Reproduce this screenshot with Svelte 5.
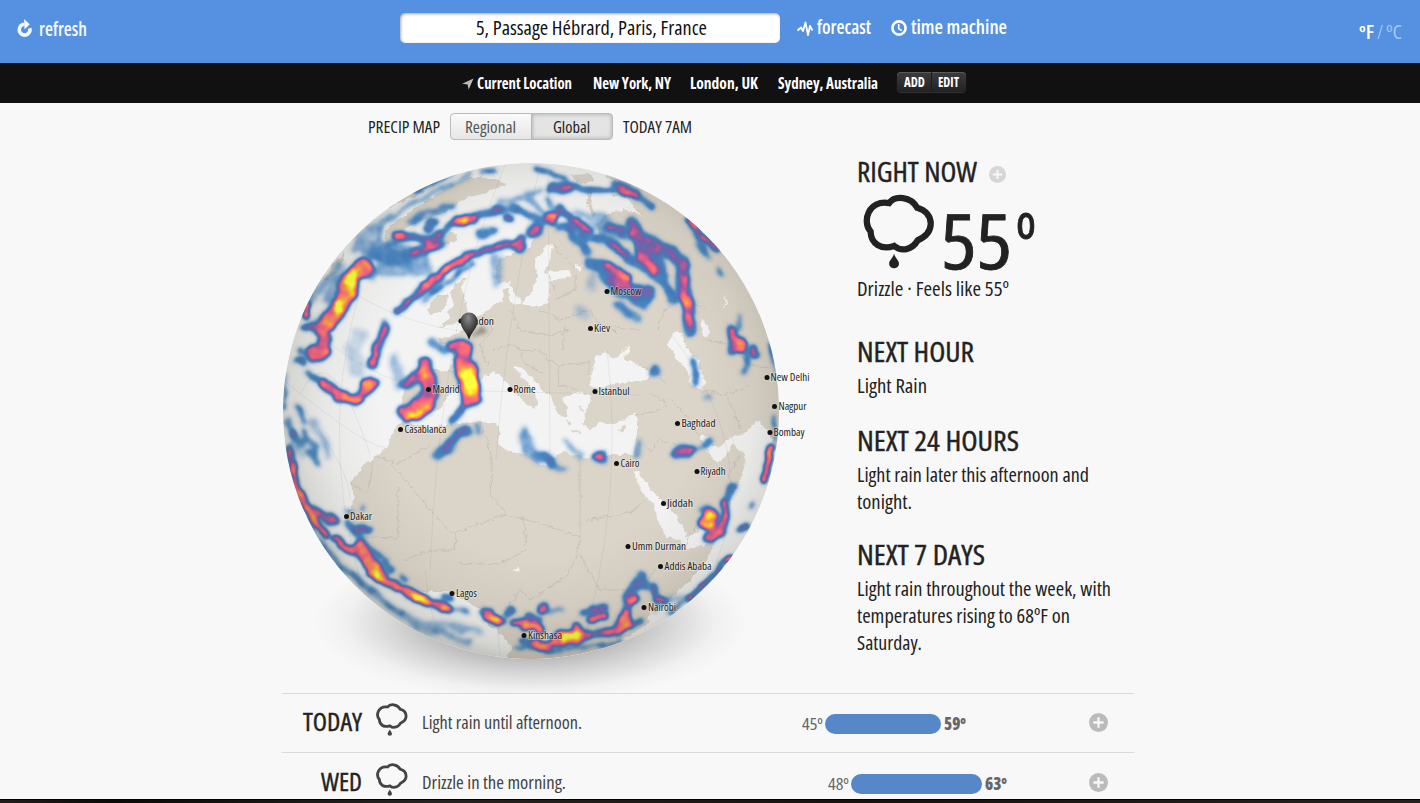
<script>
  const cities = [
    ['London', 461, 321, 464, 30], ['Moscow', 607, 291.5, 610.5, 31], ['Kiev', 590.5, 328.5, 594, 16],
    ['Rome', 510, 389.5, 513.5, 22], ['Istanbul', 595, 391.5, 598.5, 31], ['Madrid', 428.5, 389.5, 432.5, 27],
    ['New Delhi', 767, 377.5, 770.5, 39], ['Nagpur', 774.5, 406.5, 778.5, 28], ['Bombay', 770, 432.5, 773.5, 31],
    ['Baghdad', 677.5, 423.5, 681.5, 34], ['Cairo', 616.5, 463.5, 620.5, 19], ['Riyadh', 697, 471.5, 700.5, 25],
    ['Jiddah', 663.5, 503.5, 667, 26], ['Umm Durman', 628, 546.5, 632, 54], ['Addis Ababa', 660.5, 566.5, 664.5, 47],
    ['Nairobi', 644, 607.5, 648, 28], ['Kinshasa', 524, 635.5, 528, 34], ['Lagos', 452, 593.5, 456, 21],
    ['Dakar', 346.5, 516.5, 350, 22], ['Casablanca', 400.5, 429.5, 404.5, 42]
  ];

  // Rain bands: path, stroke width, intensity 0..1
  const rain = [
    ['M364 268L352 277 346 297 337 313 323 326', 15, .74], ['M353 273L350 282M342 299L338 310', 9, 1],
    ['M345 272L332 285 325 300M312 300L325 280 340 265', 7, .2], ['M315 325L330 310 340 285', 8, .22],
    ['M325 341L323 350 314 354', 13, .68], ['M306 329L314 327 322 338', 6, .5], ['M296 361L305 363M303 354L300 350', 5, .42], ['M308 305L306 318', 4, .95],
    ['M397 312L423 288 443 270 467 257 493 247 520 245 524 240', 6, .6], ['M425 287L443 270 467 257', 7, .72], ['M518 247L523 244', 9, .58], ['M536 229L533 233', 10, .56],
    ['M430 294L452 279 471 266', 4, .46], ['M424 300L440 286', 5, .24],
    ['M394 236L413 237 433 240 440 232', 6, .5], ['M395 236L402 234', 4, .78], ['M416 252L436 246', 9, .54], ['M447 229L452 224', 5, .5],
    ['M457 221L474 219', 9, .64], ['M460 221L466 220', 6, .86], ['M475 215L495 212 513 208 525 212 540 222', 6, .38], ['M495 210L502 209', 5, .52], ['M506 218L512 218', 5, .54],
    ['M428 229L434 222', 7, .48], ['M480 234L493 230', 8, .38],
    ['M372 250L392 252 420 262', 22, .22], ['M380 258L400 258 422 250 440 243', 10, .36], ['M380 265L372 275M400 262L420 268', 8, .25], ['M385 268L425 268', 14, .2],
    ['M382 258L375 240 387 220 413 203 453 184 470 175', 4, .26], ['M372 245L372 255 392 245', 9, .3], ['M412 222L428 212 452 207', 7, .28], ['M355 250L372 228 390 218', 9, .19],
    ['M415 192L440 178 455 170M482 173L495 172', 5, .38], ['M500 202L530 195 540 190', 6, .22], ['M497 258L497 282', 9, .18],
    ['M387 327L378 346 371 363', 8, .52], ['M387 323L383 332', 9, .38], ['M376 346L372 361', 5, .68], ['M360 335L352 350 358 372', 14, .12], ['M395 360L400 385', 12, .15],
    ['M308 373L311 379 323 381', 4, .42], ['M324 382L337 395 355 400 367 388 374 381', 9, .72], ['M366 386L374 382', 12, .7], ['M350 398L356 399', 7, .85],
    ['M424 364L426 378 427 395 413 409 403 411', 12, .62], ['M423 374L405 385', 10, .58], ['M428 376L430 395', 17, .62], ['M424 371L426 375', 8, .86], ['M409 416L416 414 430 402', 10, .7], ['M411 416L418 413', 6, .84],
    ['M456 347L467 348 462 360 467 376 470 398', 14, .66], ['M468 374L471 398', 20, .7], ['M465 375L471 374 472 390', 12, .96], ['M467 378L471 386', 10, 1],
    ['M452 344L460 345', 8, .45], ['M440 346L446 350 430 342', 8, .28], ['M467 403L453 422', 7, .48], ['M466 430L452 443 438 455', 9, .4], ['M457 438L449 445', 5, .54], ['M476 424L478 432', 5, .33],
    ['M288 420L292 432 300 445 306 440M308 452L318 463 314 448 305 430M298 408L305 420', 6, .3], ['M291 430L293 438', 5, .5], ['M289 447L291 460', 5, .58], ['M300 455L290 435M312 420L330 455', 6, .16],
    ['M292 465L296 485 304 504 314 520 327 535', 5, .86], ['M314 511L335 520', 8, .5], ['M318 513L334 519', 4, .56],
    ['M335 540L350 550 366 562 376 575 395 585 413 595 427 603 448 608', 7, .72], ['M360 549L372 567 381 577', 13, .74], ['M370 574L386 582M405 590L425 602', 6, .97], ['M436 607L450 607', 5, .8],
    ['M347 522L360 538 377 552 392 570', 5, .38], ['M357 528L367 530', 7, .46], ['M402 577L405 579', 4, .5], ['M362 506L361 508M346 512L352 510', 4, .3], ['M444 598L452 598', 4, .54],
    ['M310 530L335 560 380 600 420 627 470 642', 7, .22], ['M325 548L355 580 400 612', 4, .33], ['M410 620L450 626 480 632', 7, .18], ['M450 608L468 612', 4, .33],
    ['M486 612L490 613', 6, .54], ['M486 618L500 621', 6, .8], ['M495 620L502 621', 5, .95], ['M514 623L535 626 540 632', 6, .8], ['M507 611L513 609', 7, .5], ['M530 617L538 619', 5, .6],
    ['M523 640L532 643 545 647 555 640 573 635 600 633 622 630', 6, .6], ['M536 645L547 646', 8, .76], ['M560 638L577 635', 12, .78], ['M567 638L577 635', 6, 1], ['M575 628L576 640', 8, .76],
    ['M516 647L530 648M548 652L572 648 606 645 620 640', 3, .42], ['M541 608L546 608', 6, .6], ['M562 610L550 612', 4, .27],
    ['M583 612L603 606', 6, .5], ['M591 620L605 615', 8, .64], ['M641 580L627 598 625 615 620 628', 8, .44], ['M628 603L638 598M627 615L622 619M622 629L630 622', 7, .72], ['M623 623L627 622', 5, .85],
    ['M641 575L636 583 646 585', 8, .42], ['M655 588L657 600 664 602', 7, .46], ['M655 602L661 600', 5, .66], ['M618 634L642 620', 3, .5], ['M655 610L672 597 690 595', 6, .2],
    ['M711 516L708 523', 15, .76], ['M712 517L708 524', 9, 1], ['M724 504L727 516 720 528 711 542', 6, .64], ['M707 540L720 530', 7, .62], ['M733 487L727 499', 6, .48], ['M702 510L706 509', 7, .33],
    ['M679 453L688 450', 11, .5], ['M682 453L686 451', 6, .58], ['M687 453L706 444', 4, .36], ['M705 443L708 440', 7, .38], ['M599 457L604 458', 9, .5], ['M601 457L603 458', 4, .6], ['M546 458L551 463', 9, .46], ['M524 432L530 452 540 458', 10, .25], ['M553 462L565 470M566 441L582 456', 5, .22], ['M638 440L638 459', 4, .26],
    ['M771 448L768 463 763 480', 6, .86], ['M740 531L748 525', 5, .54], ['M750 508L753 504', 4, .36], ['M732 555L712 577 690 599', 3, .8], ['M690 598L670 612', 4, .36],
    ['M536 170L550 172 567 178', 3, .46], ['M551 189L568 187', 10, .5], ['M570 187L597 190 625 191', 4, .48], ['M613 183L630 190 638 198 650 206', 6, .46], ['M622 191L634 193', 6, .66],
    ['M550 215L554 216', 6, .76], ['M544 221L553 223', 5, .54], ['M530 200L540 210 548 220M548 200L558 212', 5, .26], ['M560 208L575 222 589 231', 5, .5], ['M578 223L589 231', 5, .62],
    ['M560 227L580 230 585 238M572 237L587 250', 7, .38], ['M592 238L600 240', 5, .45], ['M578 213L600 220', 7, .18], ['M612 226L622 233', 7, .5], ['M590 220L612 240', 7, .2], ['M597 218L625 235', 12, .2],
    ['M631 222L642 237 670 252 683 264 682 283 688 303 690 332', 11, .46], ['M684 262L682 283 688 305 690 320', 9, .57], ['M683 297L687 303', 6, .8], ['M635 232L645 252', 13, .5], ['M643 255L653 268', 8, .66], ['M660 250L680 260', 12, .46],
    ['M605 240L630 258 660 277 674 298', 10, .37], ['M608 241L624 253', 6, .5], ['M645 245L662 275', 14, .37], ['M590 262L606 268 625 282', 10, .42], ['M609 266L628 278', 6, .74], ['M607 276L622 290 648 294', 15, .42], ['M620 285L633 293 648 293', 7, .55], ['M633 300L645 305', 10, .33],
    ['M616 305L637 318', 6, .3], ['M592 275L592 285M580 308L585 315', 9, .13], ['M732 332L732 349 742 346', 9, .6], ['M739 341L742 348', 8, .82], ['M753 348L756 356', 5, .62], ['M749 352L748 363 743 372', 5, .38], ['M739 315L740 328', 5, .28],
    ['M693 362L694 383', 5, .47], ['M652 373L657 369', 7, .38], ['M692 228L710 258M697 245L708 255', 4, .35], ['M718 269L722 273', 3, .38], ['M705 398L709 397', 4, .23], ['M687 218L703 237 719 251', 3, .72], ['M285 375L284 410M774 415L776 440M770 345L776 372', 2, .5]
  ].sort((a, b) => a[2] - b[2]);

  const days = [
    { name: 'TODAY', nameW: 59, text: 'Light rain until afternoon.', textW: 160, low: '45º', high: '59º', start: 520, bar: 116 },
    { name: 'WED', nameW: 41, text: 'Drizzle in the morning.', textW: 144, low: '48º', high: '63º', start: 546, bar: 131 }
  ];
  let unit = $state('F');
  let view = $state('Global');
</script>

{#snippet t(text, w, size, weight = 400)}
  <svg class="t" class:medium={weight === 500} class:large={size > 60} width={w} height={size}><text x="0" y={size} textLength={w} lengthAdjust="spacingAndGlyphs" font-size={size} font-weight={weight === 500 ? 400 : weight}>{text}</text></svg>
{/snippet}

{#snippet cloud(w, h)}
  <svg class="cloud" width={w} height={h} viewBox="68 133 218 224" preserveAspectRatio="none">
    <path d="M147 160C165 136 213 140 232 174C258 181 274 200 273 224C272 248 255 262 234 271C216 302 183 305 162 288C123 301 92 282 91 245C64 214 85 150 147 160Z" fill="none" stroke="currentColor" stroke-width="19" stroke-linejoin="miter" />
    <path d="M162 311C165 324 177 331 177 341A15 14 0 0 1 147 341C147 331 159 324 162 311Z" fill="currentColor" />
  </svg>
{/snippet}

{#snippet plus(size)}
  <svg class="plus" width={size} height={size} viewBox="0 0 20 20"><circle cx="10" cy="10" r="10" fill="currentColor" /><path d="M10 4.6V15.4M4.6 10H15.4" stroke="#f8f8f8" stroke-width="2.4" /></svg>
{/snippet}

<div class="page">
  <header>
    <a class="refresh">
      <svg width="16" height="19" viewBox="0 0 16 19"><path d="M7.6 5.3A5.4 5.4 0 1 0 12.8 9.2" fill="none" stroke="#f5f9ff" stroke-width="3.6" /><path d="M7 0L12.8 5.2 7.6 10.2Z" fill="#f5f9ff" /></svg>
      {@render t('refresh', 48, 20, 600)}
    </a>
    <div class="search">{@render t('5, Passage Hébrard, Paris, France', 231, 20)}</div>
    <a class="nav forecast">
      <svg width="17" height="17" viewBox="0 0 17 17"><path d="M.5 10.500L4 7.500 6 11 8.500 2.500 11 15 13 6 15.500 10.500" fill="none" stroke="#fff" stroke-width="1.8" stroke-linejoin="round" /></svg>
      {@render t('forecast', 54, 20, 600)}
    </a>
    <a class="nav time">
      <svg width="16" height="16" viewBox="0 0 16 16"><circle cx="8" cy="8" r="6.6" fill="none" stroke="#fff" stroke-width="2.6" /><path d="M7.7 4V8.6L10.8 10.6" fill="none" stroke="#fff" stroke-width="1.6" /></svg>
      {@render t('time machine', 96, 20, 600)}
    </a>
    <div class="units">
      <span class:off={unit !== 'F'}>{@render t('ºF', 15, 19, 600)}</span>
      <span class="off">{@render t('/', 6, 19)}</span>
      <span class:off={unit !== 'C'}>{@render t('ºC', 16, 19)}</span>
    </div>
  </header>

  <nav class="places">
    <svg class="arrow" width="12" height="12" viewBox="0 0 12 12"><path d="M11.5.5L6.7 11.5 5.6 6.6.2 5.8Z" fill="#bbb" /></svg>
    {@render t('Current Location', 95, 16, 700)}
    {@render t('New York, NY', 78, 16, 700)}
    {@render t('London, UK', 68, 16, 700)}
    {@render t('Sydney, Australia', 100, 16, 700)}
    <div class="edit"><b>{@render t('ADD', 21, 13.5, 700)}</b><b>{@render t('EDIT', 21, 13.5, 700)}</b></div>
  </nav>

  <main>
    <section class="map">
      <div class="controls">
        {@render t('PRECIP MAP', 72, 16)}
        <div class="toggle">
          <span class:on={view === 'Regional'}>{@render t('Regional', 51, 16)}</span>
          <span class:on={view === 'Global'}>{@render t('Global', 37, 16)}</span>
        </div>
        {@render t('TODAY 7AM', 69, 16)}
      </div>
      <svg class="globe" width="540" height="540" viewBox="282 153 540 540">
        <defs>
          <clipPath id="sphere"><circle cx="531" cy="411" r="248" /></clipPath>
          <radialGradient id="shade" cx=".52" cy=".47" r=".54">
            <stop offset=".6" stop-color="#443" stop-opacity="0" /><stop offset=".8" stop-color="#443" stop-opacity=".06" />
            <stop offset=".94" stop-color="#443" stop-opacity=".17" /><stop offset="1" stop-color="#443" stop-opacity=".3" />
          </radialGradient>
          <radialGradient id="drop" cx=".5" cy=".5" r=".5">
            <stop offset="0" stop-color="#000" stop-opacity=".42" /><stop offset=".4" stop-color="#000" stop-opacity=".28" /><stop offset=".65" stop-color="#000" stop-opacity=".13" /><stop offset=".85" stop-color="#000" stop-opacity=".03" /><stop offset="1" stop-color="#000" stop-opacity="0" />
          </radialGradient>
          <radialGradient id="pinFill" cx=".45" cy=".2" r=".7"><stop offset="0" stop-color="#8a8a8a" /><stop offset="1" stop-color="#1b1b1b" /></radialGradient>
          <filter id="soft"><feGaussianBlur stdDeviation="2" /></filter>
          <filter id="coast" x="-5%" y="-5%" width="110%" height="110%"><feTurbulence type="fractalNoise" baseFrequency=".16" numOctaves="3" seed="4" /><feDisplacementMap in="SourceGraphic" scale="6" xChannelSelector="R" yChannelSelector="G" /></filter>
          <filter id="heat" filterUnits="userSpaceOnUse" x="275" y="155" width="515" height="515" color-interpolation-filters="sRGB">
            <feTurbulence type="fractalNoise" baseFrequency=".06" numOctaves="3" seed="11" result="n" />
            <feDisplacementMap in="SourceGraphic" in2="n" scale="9" xChannelSelector="R" yChannelSelector="G" />
            <feGaussianBlur stdDeviation="2.1" result="b" />
            <feTurbulence type="fractalNoise" baseFrequency=".08" numOctaves="2" seed="5" />
            <feColorMatrix values="1 0 0 0 0  1 0 0 0 0  1 0 0 0 0  0 0 0 0 1" result="g" />
            <feComposite in="b" in2="g" operator="arithmetic" k1=".7" k2=".68" result="v" />
            <feComponentTransfer result="c">
              <feFuncR type="table" tableValues=".22 .22 .22 .22 .24 .50 .86 1 1 1 1" />
              <feFuncG type="table" tableValues=".50 .50 .50 .49 .46 .34 .34 .42 .58 .82 1" />
              <feFuncB type="table" tableValues=".78 .78 .77 .75 .72 .65 .54 .48 .32 .14 .25" />
            </feComponentTransfer>
            <feColorMatrix in="v" values="0 0 0 0 0  0 0 0 0 0  0 0 0 0 0  1 0 0 0 0" />
            <feComponentTransfer result="m"><feFuncA type="table" tableValues="0 .2 .55 .88 .95 .96 .97 1 1 1 1" /></feComponentTransfer>
            <feComposite in="c" in2="m" operator="in" />
          </filter>
        </defs>
        <ellipse cx="531" cy="622" rx="218" ry="80" fill="url(#drop)" />
        <g clip-path="url(#sphere)">
          <rect x="280" y="160" width="504" height="504" fill="#f3f3f3" />
          <g filter="url(#coast)">
            <g fill="#dbd4c9">
              <path d="M399 423L393 432 388 447 377 454 363 465 351 483 353 500 348 515 352 530 367 550 383 570 397 585 420 592 447 592 457 594 470 605 487 609 487 623 507 640 513 648 506 655 520 680 610 670 620 640 647 625 650 613 673 597 703 567 715 543 700 545 687 549 685 538 703 528 727 513 730 497 737 487 744 472 745 453 737 449 732 437 745 433 758 421 766 430 772 440 775 450 800 445 800 300 700 150 620 160 605 177 625 185 612 195 630 200 640 215 625 210 612 212 603 217 595 225 600 233 588 240 578 232 565 226 550 222 540 227 527 250 500 258 495 273 498 284 510 280 513 290 522 303 515 305 508 300 510 290 503 289 502 302 493 305 483 313 473 320 460 332 450 337 438 338 440 343 453 347 452 363 448 372 420 367 407 377 402 397 403 411 412 420Z" />
              <path d="M455 283L467 277 461 287 463 293 467 307 468 314 462 322 440 327 450 318 445 313 453 305 450 293Z" />
              <path d="M427 310L437 295 448 295 447 303 441 312 428 314Z" /><path d="M441 238L447 232 457 235 455 242 445 244Z" />
              <path d="M383 240L388 227 403 217 423 203 447 187 467 178 493 178 507 183 487 193 467 198 450 210 427 218 403 230 393 240 387 246Z" />
              <path d="M310 300L325 270 340 248 363 226 390 207 423 192 440 180 400 185 350 225 310 270 300 300ZM322 282L335 262 345 252 340 270Z" />
              <path d="M570 175L590 174 595 181 580 184Z" /><path d="M587 193L592 192 590 205 597 215 592 216 587 206Z" />
              <path d="M492 384L497 383 497 390 492 391ZM490 393L496 391 496 404 490 405ZM515 416L530 413 528 421 518 421Z" />
            </g>
            <g fill="#f3f3f3">
              <path d="M406 421L413 417 432 413 443 405 447 395 460 388 480 380 493 371 500 374 512 390 525 402 535 410 538 402 530 385 514 368 520 366 535 382 550 395 557 412 565 418 568 408 562 398 577 392 592 396 587 408 583 425 590 430 600 422 612 424 637 414 637 433 633 455 610 455 597 462 582 457 563 452 550 460 547 468 540 463 527 455 510 453 497 443 500 433 497 423 480 422 460 423 430 427 413 424Z" />
              <path d="M596 357L605 353 613 358 618 357 630 345 630 352 623 357 640 365 650 372 646 380 627 382 610 385 595 389 590 383Z" />
              <path d="M673 332L682 332 684 343 693 357 700 360 698 368 706 382 700 388 691 384 688 372 673 353 667 345Z" /><path d="M700 321L704 320 709 333 707 338 702 334Z" />
              <path d="M547 245L553 247 550 260 544 272 570 271 572 276 550 281 548 303 533 307 522 303 528 297 533 290 538 275 534 262Z" /><path d="M575 264L582 266 580 271 575 268Z" />
              <path d="M633 473L638 472 653 492 667 507 677 517 684 528 686 540 692 545 685 550 680 540 667 537 658 522 653 503 645 497Z" />
              <path d="M700 436L707 436 711 445 720 447 731 437 734 442 727 455 717 463 708 452Z" />
              <path d="M684 540L700 532 716 526 722 530 712 542 700 546 688 550Z" /><path d="M725 295L727 304 724 307M512 570L518 567 522 573" />
            </g>
            <path d="M566 420L570 425M579 406L584 412M571 431L582 433" stroke="#dbd4c9" stroke-width="2" /><path d="M619 431L627 426" stroke="#dbd4c9" stroke-width="4" />
          </g>
          <g fill="none" stroke="#beb5a9" stroke-width=".8" opacity=".75" filter="url(#coast)">
            <path d="M377 457L397 464 430 446M392 464L450 533 456 533 506 514 520 518 528 519 580 537 580 460M372 460L372 470 367 493 350 483M398 488L398 538 360 537M480 423L487 440 492 460 491 495 506 514M456 533L455 550 433 550 403 560M524 519L526 550 500 565 460 563M580 537L575 560 568 575 530 600 520 590 500 620M585 520L630 513 645 500M580 555L600 590 640 590 655 570M636 440L650 450 660 440 695 450M637 415L660 410 670 400 690 420 700 436M665 402L650 392M687 545L690 535 710 515M735 495L728 475 740 455" />
            <path d="M448 372L468 378M483 315L492 330 480 345 488 365M492 350L510 345 525 352 540 350 548 360 560 365 590 362M510 310L520 330 545 335 570 330M540 310L560 320 590 310 600 325 640 330M555 300L575 290 575 275M548 275L555 290M553 245L562 255 575 268M560 365L558 385 578 390M520 352L525 365 545 372M590 362L588 375M640 365L660 375 665 385M657 330L665 310 680 300 705 308M709 340L730 345 750 365 770 368M700 390L725 395 750 385M726 395L742 430M565 325L562 350M612 330L622 340" />
          </g>
          <g fill="none" stroke="#777" stroke-opacity=".13" stroke-width=".8">
            <path d="M283 380Q370 450 385 447M345 287Q400 325 475 333M300 395Q330 330 370 455M505 165Q440 320 430 570M540 165Q505 330 496 460M548 165L550 460M360 290Q310 460 380 640M305 410Q350 470 350 500M320 335Q380 388 450 390T640 395M607 350Q625 500 580 655M672 335Q780 480 690 610M425 570Q430 620 445 650M496 615L500 655" />
          </g>
          <g filter="url(#heat)">
            <rect x="275" y="155" width="515" height="515" fill="#000" />
            <g fill="none" stroke-linecap="round" stroke-linejoin="round">
              {#each rain as [d, w, v]}<path {d} stroke-width={w + 1} stroke="rgb({v * 255},{v * 255},{v * 255})" />{/each}
            </g>
          </g>
          <circle cx="531" cy="411" r="248" fill="url(#shade)" />
        </g>
        <g class="cities">
          {#each cities as [name, cx, cy, x, w]}
            <circle {cx} {cy} r="2.5" /><text {x} y={cy + 3.5} textLength={w} lengthAdjust="spacingAndGlyphs">{name}</text>
          {/each}
        </g>
        <path d="M469 338L482 326 488 332Z" opacity=".35" filter="url(#soft)" />
        <path d="M469 340C467 332 460.500 329 460.500 321A8.500 8.500 0 0 1 477.500 321C477.500 329 471 332 469 340Z" fill="url(#pinFill)" />
      </svg>
    </section>

    <section class="summary">
      <div class="now-title">{@render t('RIGHT NOW', 120, 28, 500)}<i>{@render plus(17)}</i></div>
      <div class="now">{@render cloud(72, 75)}<div class="temp">{@render t('55', 71, 77, 500)}{@render t('º', 20, 77, 500)}</div></div>
      {@render t('Drizzle · Feels like 55º', 152, 20)}
      <div class="block hour">{@render t('NEXT HOUR', 117, 28, 500)}{@render t('Light Rain', 70, 20)}</div>
      <div class="block day">{@render t('NEXT 24 HOURS', 162, 28, 500)}{@render t('Light rain later this afternoon and', 232, 20)}{@render t('tonight.', 55, 20)}</div>
      <div class="block week">{@render t('NEXT 7 DAYS', 128, 28, 500)}{@render t('Light rain throughout the week, with', 254, 20)}{@render t('temperatures rising to 68ºF on', 213, 20)}{@render t('Saturday.', 65, 20)}</div>
    </section>
  </main>

  <section class="days">
    {#each days as d}
      <div class="row">
        <div class="name">{@render t(d.name, d.nameW, 25, 500)}</div>
        <div class="icon">{@render cloud(32, 33)}</div>
        <div class="text">{@render t(d.text, d.textW, 18)}</div>
        <div class="range" style="margin-left:{d.start - 140}px">
          {@render t(d.low, 21, 17)}<span class="bar" style="width:{d.bar}px"></span>{@render t(d.high, 22, 17, 800)}
        </div>
        <div class="more">{@render plus(19)}</div>
      </div>
    {/each}
  </section>
  <footer></footer>
</div>

<style>
  :global(body) { background: #f8f8f8; overflow: hidden; }
  .page { height: 803px; overflow: hidden; display: flex; flex-direction: column; background: #f8f8f8; color: #222; font-family: "Open Sans", "Noto Sans", sans-serif; font-stretch: 75%; }
  svg { display: block; flex: none; }
  .t { overflow: visible; }
  .t text { fill: currentColor; }
  .medium text { stroke: currentColor; stroke-width: .4px; }
  .large text { stroke-width: .8px; }
  header { height: 63px; flex: none; background: #5591e0; color: #fff; display: flex; align-items: flex-start; }
  .refresh { display: flex; margin: 16px 0 0 17px; gap: 6px; width: 70px; color: #f5f9ff; }
  .refresh svg:first-child { margin-top: 3px; }
  .search { width: 380px; height: 30px; box-sizing: border-box; margin: 13px 0 0 313px; padding: 2px 0 0 76px; background: #fff; color: #111; border-radius: 5px; box-shadow: inset 1px 1px 3px rgba(0, 0, 0, .35); }
  .nav { display: flex; padding-top: 14px; }
  .forecast { margin-left: 17px; gap: 3px; }
  .forecast svg:first-child { margin-top: 6px; }
  .time { margin-left: 20px; gap: 4px; }
  .time svg:first-child { margin-top: 6px; }
  .units { display: flex; margin: 20px 18px 0 auto; gap: 3px; }
  .off { color: #a6c6f2; }
  .places { height: 40px; flex: none; background: #111; color: #fff; display: flex; align-items: flex-start; padding-left: 462px; }
  .places > .t { margin: 10px 21px 0 0; }
  .places > .t:nth-of-type(3) { margin-right: 19px; }
  .places > .t:nth-of-type(4) { margin-right: 20px; }
  .places > .t:nth-of-type(5) { margin-right: 19px; }
  .arrow { margin: 15px 3px 0 0; }
  .edit { display: flex; margin-top: 9px; width: 69px; height: 20px; border-radius: 4px; background: linear-gradient(#3c3c3c, #222); box-shadow: inset 0 1px #5a5a5a, 0 1px 1px #333; }
  .edit b { display: block; width: 34px; height: 20px; padding: 1px 0 0 7px; box-sizing: border-box; }
  .edit b + b { border-left: 1px solid #1c1c1c; padding-left: 6px; }
  main { display: flex; height: 590px; flex: none; padding-left: 282px; }
  .map { width: 540px; flex: none; }
  .controls { display: flex; height: 50px; padding-left: 86px; box-sizing: border-box; }
  .controls > .t { margin-top: 14px; }
  .toggle { display: flex; margin: 10px 10px 0; width: 163px; height: 27px; box-sizing: border-box; border: 1px solid #bbb; border-radius: 4px; background: linear-gradient(#fafafa, #e6e6e6); color: #555; }
  .toggle span { flex: 1; padding: 3px 0 0 14px; }
  .toggle .on { flex: 0 0 81px; box-sizing: border-box; padding-left: 21px; background: #e4e4e4; border-left: 1px solid #b5b5b5; color: #222; box-shadow: inset 0 0 4px rgba(0, 0, 0, .28); border-radius: 0 3px 3px 0; }
  .cities text { font-size: 10.5px; fill: #222; paint-order: stroke; stroke: #fff; stroke-opacity: .4; stroke-width: 1.5px; }
  .cities circle { fill: #111; }
  .summary { padding: 51px 0 0 35px; }
  .now-title { display: flex; height: 28px; }
  .now-title i { color: #d6d6d6; margin: 12px 0 0 12px; }
  .now { display: flex; height: 75px; margin: 12px 0 7px 6px; }
  .temp { display: flex; margin: -2px 0 0 6px; gap: 4px; }
  .block .t + .t { margin-top: 11px; }
  .block .t + .t + .t { margin-top: 7px; }
  .hour { margin-top: 38px; }
  .day { margin-top: 30px; }
  .week { margin-top: 28px; }
  .days { width: 852px; margin-left: 282px; height: 106px; flex: none; overflow: hidden; }
  .row { display: flex; height: 59px; border-top: 1px solid #dadada; box-sizing: border-box; }
  .row + .row { height: 61px; padding-top: 1px; }
  .name { width: 80px; display: flex; justify-content: flex-end; margin-top: 12px; }
  .icon { margin: 9px 0 0 14px; color: #444; }
  .text { width: 160px; margin: 17px -160px 0 14px; color: #444; }
  .range { display: flex; color: #666; margin-top: 19px; width: 162px; }
  .bar { height: 20px; flex: none; border-radius: 10px; background: #5687c8; margin: 1px 3px 0 2px; }
  .more { color: #bbb; margin: 19px 26px 0 auto; }
  footer { flex: 1; border-top: 1px solid #000; background: linear-gradient(90deg, #211e1d, #0c0a09 8%, #252321 30%, #17120f 60%, #24211f); }
</style>
